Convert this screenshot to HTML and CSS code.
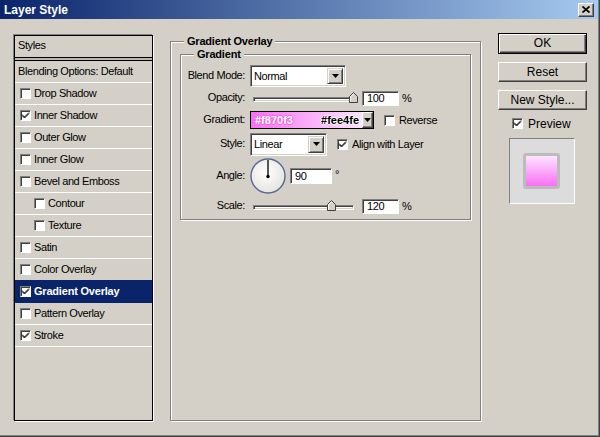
FILE: index.html
```html
<!DOCTYPE html>
<html lang="en">
<head>
  <meta charset="UTF-8" />
  <title>Layer Style</title>
  <link rel="stylesheet" href="styles.css">
</head>
<body>
  <div class="dialog">

    <div class="titlebar">
      <span class="title">Layer Style</span>
      <span class="close-btn">
        <svg width="8" height="7" viewBox="0 0 8 7"><path d="M0.5 0.5 L7.5 6.5 M7.5 0.5 L0.5 6.5" stroke="#000" stroke-width="1.7" fill="none"/></svg>
      </span>
    </div>

    <div class="dialog-body">

      <!-- left: list of effects -->
      <div class="styles-list">
        <div class="list-head">Styles</div>
        <div class="list-divider"></div>
        <div class="list-row plain">Blending Options: Default</div>
        <div class="list-row"><span class="check"></span>Drop Shadow</div>
        <div class="list-row"><span class="check"><svg width="9" height="9" viewBox="0 0 9 9"><path d="M1 3.5 L3.5 6 L8 1.5 M1 4.5 L3.5 7 L8 2.5" stroke="#000" fill="none"/></svg></span>Inner Shadow</div>
        <div class="list-row"><span class="check"></span>Outer Glow</div>
        <div class="list-row"><span class="check"></span>Inner Glow</div>
        <div class="list-row"><span class="check"></span>Bevel and Emboss</div>
        <div class="list-row sub"><span class="check"></span>Contour</div>
        <div class="list-row sub"><span class="check"></span>Texture</div>
        <div class="list-row"><span class="check"></span>Satin</div>
        <div class="list-row"><span class="check"></span>Color Overlay</div>
        <div class="list-row active"><span class="check"><svg width="9" height="9" viewBox="0 0 9 9"><path d="M1 3.5 L3.5 6 L8 1.5 M1 4.5 L3.5 7 L8 2.5" stroke="#000" fill="none"/></svg></span>Gradient Overlay</div>
        <div class="list-row"><span class="check"></span>Pattern Overlay</div>
        <div class="list-row"><span class="check"><svg width="9" height="9" viewBox="0 0 9 9"><path d="M1 3.5 L3.5 6 L8 1.5 M1 4.5 L3.5 7 L8 2.5" stroke="#000" fill="none"/></svg></span>Stroke</div>
      </div>

      <!-- middle: settings -->
      <div class="group group-outer">
        <span class="group-title">Gradient Overlay</span>
        <div class="group group-inner">
          <span class="group-title">Gradient</span>

          <div class="field first-field">
            <span class="field-label">Blend Mode:</span>
            <div class="select select-blend">
              <span>Normal</span>
              <span class="select-btn"><svg width="7" height="4" viewBox="0 0 7 4"><path d="M0 0 H7 L3.5 4 Z" fill="#000"/></svg></span>
            </div>
          </div>

          <div class="field">
            <span class="field-label">Opacity:</span>
            <div class="slider">
              <div class="track"></div>
              <svg class="thumb" style="left: 99px" width="9" height="11" viewBox="0 0 9 11"><path d="M0.5 10.5 V4.5 L4.5 0.5 L8.5 4.5 V10.5 Z" fill="#d4d0c8" stroke="#404040"/><path d="M1.5 9.5 V4.9 L4.5 1.9" fill="none" stroke="#fff"/></svg>
            </div>
            <span class="num">100</span>
            <span class="unit">%</span>
          </div>

          <div class="field">
            <span class="field-label">Gradient:</span>
            <div class="gradient-pick">
              <div class="gradient-bar">
                <span class="grad-from">#f870f3</span>
                <span class="grad-to">#fee4fe</span>
              </div>
              <span class="gradient-btn"><svg width="7" height="4" viewBox="0 0 7 4"><path d="M0 0 H7 L3.5 4 Z" fill="#000"/></svg></span>
            </div>
            <span class="check check-gap"></span>
            <span class="check-label">Reverse</span>
          </div>

          <div class="field field-style">
            <span class="field-label">Style:</span>
            <div class="select select-style">
              <span>Linear</span>
              <span class="select-btn"><svg width="7" height="4" viewBox="0 0 7 4"><path d="M0 0 H7 L3.5 4 Z" fill="#000"/></svg></span>
            </div>
            <span class="check check-gap"><svg width="9" height="9" viewBox="0 0 9 9"><path d="M1 3.5 L3.5 6 L8 1.5 M1 4.5 L3.5 7 L8 2.5" stroke="#000" fill="none"/></svg></span>
            <span class="check-label">Align with Layer</span>
          </div>

          <div class="field field-angle">
            <span class="field-label">Angle:</span>
            <svg class="dial" width="36" height="36" viewBox="0 0 36 36">
              <defs>
                <radialGradient id="dialfill" cx="45%" cy="40%" r="65%">
                  <stop offset="0" stop-color="#ffffff"/>
                  <stop offset="1" stop-color="#e4e2dc"/>
                </radialGradient>
              </defs>
              <circle cx="18" cy="18" r="17" fill="url(#dialfill)" stroke="#56689a" stroke-width="1.4"/>
              <line x1="18" y1="18.5" x2="18" y2="2" stroke="#000" stroke-width="1.3"/>
              <circle cx="18" cy="18.5" r="1.7" fill="#000"/>
            </svg>
            <span class="num num-angle">90</span>
            <span class="unit degree">°</span>
          </div>

          <div class="field">
            <span class="field-label">Scale:</span>
            <div class="slider">
              <div class="track track-short"></div>
              <svg class="thumb" style="left: 77px" width="9" height="11" viewBox="0 0 9 11"><path d="M0.5 10.5 V4.5 L4.5 0.5 L8.5 4.5 V10.5 Z" fill="#d4d0c8" stroke="#404040"/><path d="M1.5 9.5 V4.9 L4.5 1.9" fill="none" stroke="#fff"/></svg>
            </div>
            <span class="num">120</span>
            <span class="unit">%</span>
          </div>
        </div>
      </div>

      <!-- right: buttons and preview -->
      <div class="actions">
        <span class="btn btn-default">OK</span>
        <span class="btn">Reset</span>
        <span class="btn">New Style...</span>
        <div class="preview-toggle">
          <span class="check"><svg width="9" height="9" viewBox="0 0 9 9"><path d="M1 3.5 L3.5 6 L8 1.5 M1 4.5 L3.5 7 L8 2.5" stroke="#000" fill="none"/></svg></span>
          <span>Preview</span>
        </div>
        <div class="preview-box">
          <div class="preview-swatch"></div>
        </div>
      </div>

    </div>
  </div>
</body>
</html>
```

FILE: styles.css
```css
* {
  box-sizing: border-box;
}
body {
  margin: 0;
  font-family: "Liberation Sans", Arial, sans-serif;
  font-size: 11px;
  letter-spacing: -0.4px;
  color: #000;
}
.dialog {
  width: 600px;
  height: 437px;
  background: #d4d0c8;
  box-shadow: inset -1px -1px #404040, inset -2px -2px #808080;
}

/* title bar */
.titlebar {
  height: 19px;
  margin-right: 2px;
  display: flex;
  align-items: center;
  justify-content: space-between;
  padding: 0 4px 0 4px;
  background: linear-gradient(to right, #0a246a, #a6caf0);
}
.title {
  color: #fff;
  font-weight: bold;
  font-size: 12px;
  letter-spacing: 0;
}
.close-btn {
  width: 16px;
  height: 14px;
  display: flex;
  align-items: center;
  justify-content: center;
  background: #d4d0c8;
  border: 1px solid;
  border-color: #fff #404040 #404040 #fff;
  box-shadow: inset -1px -1px #808080;
}

.dialog-body {
  display: flex;
  align-items: flex-start;
  padding: 14px 0 0 14px;
}

/* styles list */
.styles-list {
  width: 139px;
  height: 386px;
  margin-top: 2px;
  border: 1px solid #000;
  box-shadow: -1px -1px #808080, 1px 1px #fff;
}
.list-head {
  height: 21px;
  line-height: 19px;
  padding-left: 3px;
}
.list-divider {
  height: 4px;
  border-top: 1px solid #000;
  border-bottom: 1px solid #000;
  background: #bcb8b0;
}
.list-row {
  height: 22px;
  display: flex;
  align-items: center;
  gap: 3px;
  padding-left: 5px;
  padding-bottom: 1px;
  border-bottom: 1px solid #fff;
}
.list-row.plain {
  padding-left: 3px;
}
.list-row.sub {
  padding-left: 19px;
}
.list-row.active {
  background: #0a246a;
  color: #fff;
  font-weight: bold;
  letter-spacing: -0.2px;
  border-bottom-color: #0a246a;
  box-shadow: 0 -1px #0a246a;
}

.check {
  width: 11px;
  height: 11px;
  flex-shrink: 0;
  display: inline-flex;
  background: #fff;
  border: 1px solid;
  border-color: #808080 #fff #fff #808080;
  box-shadow: inset 1px 1px #404040;
}

/* group boxes */
.group {
  border: 1px solid #808080;
  box-shadow: inset 1px 1px #fff, 1px 1px #fff;
}
.group-outer {
  width: 311px;
  height: 380px;
  margin: 8px 0 0 17px;
  padding: 0 9px;
}
.group-title {
  display: block;
  width: fit-content;
  margin: -7px 0 0 4px;
  padding: 0 3px;
  line-height: 13px;
  background: #d4d0c8;
  font-weight: bold;
  letter-spacing: -0.2px;
}
.group-inner {
  margin-top: 6px;
  height: 166px;
  padding: 0 0 2px 2px;
}
.group-inner .group-title {
  margin-left: 11px;
}

/* form rows */
.field {
  display: flex;
  align-items: center;
  height: 22px;
}
.first-field {
  margin-top: 4px;
}
.field-style {
  height: 26px;
}
.field-angle {
  height: 38px;
}
.field-label {
  width: 62px;
  flex-shrink: 0;
  margin-right: 5px;
  margin-bottom: 3px;
  text-align: right;
}

.select {
  display: flex;
  align-items: center;
  justify-content: space-between;
  height: 22px;
  padding: 2px 2px 2px 3px;
  background: #fff;
  border: 1px solid;
  border-color: #808080 #fff #fff #808080;
  box-shadow: inset 1px 1px #404040, inset -1px -1px #d4d0c8;
}
.select-blend {
  width: 96px;
}
.select-style {
  width: 77px;
  height: 23px;
}
.select-btn,
.gradient-btn {
  height: 100%;
  width: 16px;
  display: flex;
  align-items: center;
  justify-content: center;
  background: #d4d0c8;
  border: 1px solid;
  border-color: #d4d0c8 #404040 #404040 #d4d0c8;
  box-shadow: inset 1px 1px #fff, inset -1px -1px #808080;
}

.slider {
  position: relative;
  width: 108px;
  height: 12px;
  padding-left: 3px;
}
.track {
  width: 105px;
  height: 5px;
  margin-top: 5px;
  background: #fff;
  border: 1px solid;
  border-color: #808080 #fff #fff #808080;
  box-shadow: inset 1px 1px #404040, inset -1px -1px #d4d0c8;
}
.track-short {
  width: 101px;
}
.thumb {
  position: absolute;
  top: 0;
}

.num {
  width: 37px;
  height: 15px;
  margin-left: 4px;
  padding-left: 4px;
  line-height: 13px;
  background: #fff;
  border: 1px solid;
  border-color: #808080 #fff #fff #808080;
  box-shadow: inset 1px 1px #404040;
}
.num-angle {
  width: 42px;
  height: 16px;
  line-height: 14px;
}
.unit {
  margin-left: 3px;
}
.degree {
  align-self: flex-start;
  margin-top: 11px;
}

.gradient-pick {
  display: flex;
  height: 18px;
  border: 1px solid #000;
}
.gradient-bar {
  width: 111px;
  display: flex;
  align-items: center;
  justify-content: space-between;
  padding: 0 3px 0 4px;
  background: linear-gradient(to right, #f870f3, #fee4fe);
  font-weight: bold;
  letter-spacing: 0;
}
.grad-from {
  color: #fff;
  text-shadow: 1px 0 #f060ea, -1px 0 #f060ea, 0 1px #f060ea, 0 -1px #f060ea;
}
.grad-to {
  color: #000;
  text-shadow: 1px 0 #fff, -1px 0 #fff, 0 1px #fff, 0 -1px #fff;
}
.gradient-btn {
  width: 11px;
  border-color: #fff #404040 #404040 #fff;
  box-shadow: inset -1px -1px #808080;
}

.check-gap {
  margin-left: 10px;
}
.check-label {
  margin-left: 4px;
}

/* right column */
.actions {
  width: 89px;
  margin-left: 17px;
  display: flex;
  flex-direction: column;
  font-size: 12px;
  letter-spacing: 0;
}
.btn {
  height: 20px;
  line-height: 18px;
  text-align: center;
  margin-top: 8px;
  border: 1px solid;
  border-color: #fff #404040 #404040 #fff;
  box-shadow: inset -1px -1px #808080;
}
.btn-default {
  height: 21px;
  margin-top: 0;
  line-height: 19px;
  border-color: #000;
  box-shadow: inset 1px 1px #fff, inset -1px -1px #404040, inset -2px -2px #808080;
}
.preview-toggle {
  display: flex;
  align-items: center;
  gap: 5px;
  height: 21px;
  margin-top: 3px;
  padding-left: 14px;
}
.preview-box {
  width: 66px;
  height: 66px;
  margin: 4px 0 0 11px;
  padding: 14px 0 0 13px;
  background: #dcdcdc;
  border: 1px solid;
  border-color: #808080 #fff #fff #808080;
}
.preview-swatch {
  width: 37px;
  height: 36px;
  border: 3px solid #bcbcbc;
  border-radius: 3px;
  background: linear-gradient(#fee4fe, #f870f3);
}
```
